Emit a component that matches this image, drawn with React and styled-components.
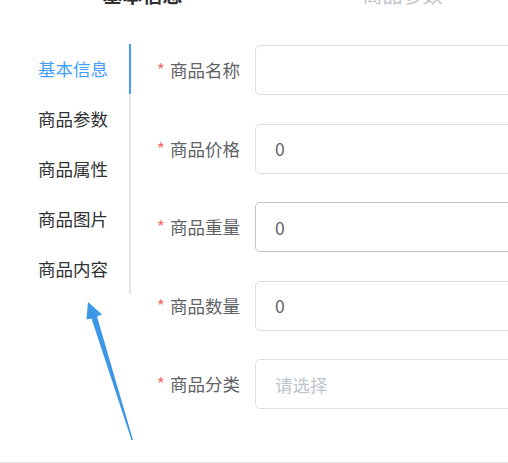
import React from "react";
import styled, { createGlobalStyle } from "styled-components";

const Global = createGlobalStyle`
  html, body { margin: 0; padding: 0; background: #fff; overflow: hidden; }
  body { font-family: "Noto Sans CJK SC", "Noto Sans", sans-serif; }
  * { box-sizing: border-box; }
`;

const Page = styled.div`
  position: relative;
  width: 508px;
  height: 463px;
  overflow: hidden;
  border-bottom: 1px solid #e4e7ed;
`;

const Steps = styled.div`
  display: grid;
  grid-template-columns: repeat(2, 260px);
  padding-left: 12.5px;
  margin-top: -15px;
  height: 20px;
`;

const StepTitle = styled.div`
  text-align: center;
  font-size: 20px;
  line-height: 20px;
  font-weight: ${(p) => (p.$active ? 700 : 400)};
  color: ${(p) => (p.$active ? "#303133" : "#c0c4cc")};
`;

const Main = styled.div`
  display: flex;
  margin-top: 39px;
`;

const TabNav = styled.div`
  width: 131px;
  flex: none;
  display: flex;
  flex-direction: column;
  border-right: 2px solid #e4e7ed;
  align-self: flex-start;
`;

const TabItem = styled.div`
  position: relative;
  height: 50px;
  line-height: 50px;
  text-align: right;
  padding-right: 21px;
  font-size: 17.5px;
  color: ${(p) => (p.$active ? "#409eff" : "#303133")};
  &::after {
    content: "";
    position: absolute;
    right: -2px;
    top: 0;
    width: 2px;
    height: 100%;
    background: ${(p) => (p.$active ? "#409eff" : "transparent")};
  }
`;

const Form = styled.div`
  padding-top: 1px;
  display: flex;
  flex-direction: column;
  gap: 28.5px;
`;

const Row = styled.div`
  display: flex;
  align-items: center;
`;

const Label = styled.label`
  width: 124px;
  flex: none;
  text-align: right;
  padding-right: 15px;
  font-size: 17.5px;
  color: #606266;
  line-height: 50px;
  &::before {
    content: "*";
    color: #f56c6c;
    margin-right: 5px;
  }
`;

const Input = styled.div`
  width: 320px;
  height: 50px;
  flex: none;
  border: 1px solid ${(p) => (p.$hover ? "#c0c4cc" : "#dcdfe6")};
  border-radius: 5px;
  padding: 0 19px;
  display: flex;
  align-items: center;
  font-size: 17.5px;
  color: ${(p) => (p.$placeholder ? "#c0c4cc" : "#606266")};
`;

const Arrow = styled.svg`
  position: absolute;
  left: 0;
  top: 0;
  pointer-events: none;
`;

const tabs = ["基本信息", "商品参数", "商品属性", "商品图片", "商品内容"];
const fields = [
  { label: "商品名称", value: "" },
  { label: "商品价格", value: "0" },
  { label: "商品重量", value: "0", hover: true },
  { label: "商品数量", value: "0" },
  { label: "商品分类", value: "请选择", placeholder: true },
];

export default function App() {
  return (
    <Page>
      <Global />
      <Steps>
        <StepTitle $active>基本信息</StepTitle>
        <StepTitle>商品参数</StepTitle>
      </Steps>
      <Main>
        <TabNav>
          {tabs.map((t, i) => (
            <TabItem key={t} $active={i === 0}>
              {t}
            </TabItem>
          ))}
        </TabNav>
        <Form>
          {fields.map((f) => (
            <Row key={f.label}>
              <Label>{f.label}</Label>
              <Input $hover={f.hover} $placeholder={f.placeholder}>
                {f.value}
              </Input>
            </Row>
          ))}
        </Form>
      </Main>
      <Arrow width="508" height="463" viewBox="0 0 508 463">
        <path
          d="M88 302 L102 314.5 L97 316.5 L133 440 L131.5 440 L91.5 318.5 L86.5 319.5 Z"
          fill="#3c97e6"
        />
      </Arrow>
    </Page>
  );
}
